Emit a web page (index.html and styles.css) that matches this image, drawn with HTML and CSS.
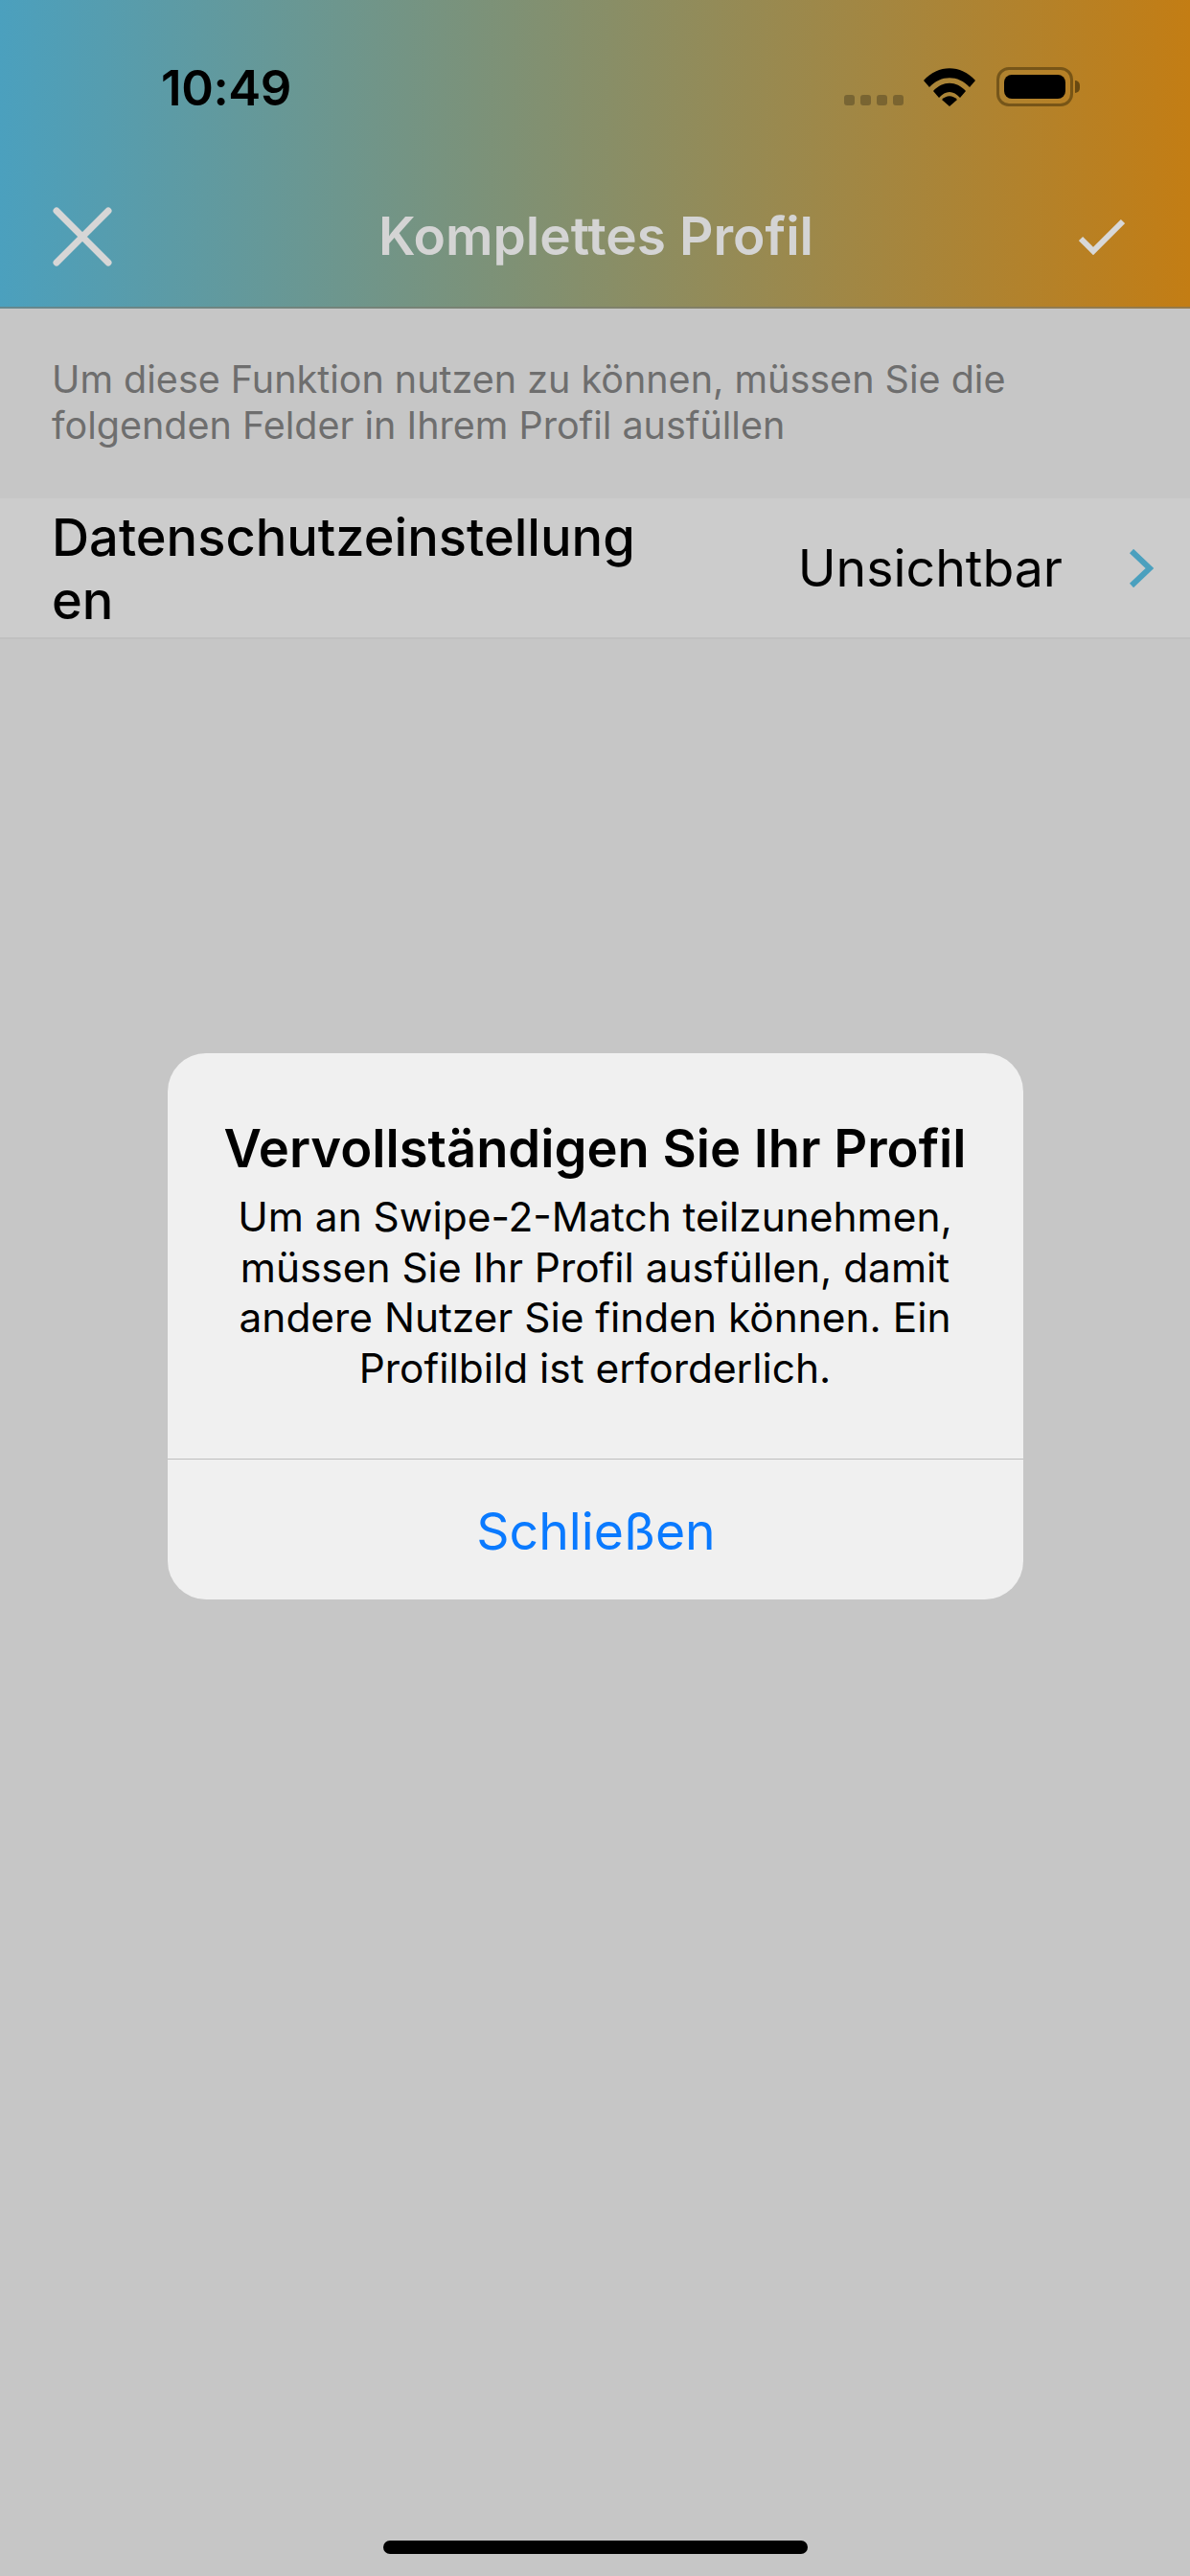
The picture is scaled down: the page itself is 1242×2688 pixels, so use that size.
FILE: index.html
```html
<!DOCTYPE html>
<html lang="de">

<head>
  <meta charset="utf-8">
  <title>Komplettes Profil</title>
  <link rel="stylesheet" href="styles.css">
</head>

<body>
  <div class="screen">
    <header class="topBar">
      <div class="statusBar">
        <span class="time">10:49</span>
        <div class="statusIcons">
          <div class="signal"><i></i><i></i><i></i><i></i></div>
          <svg class="wifi" viewBox="0 0 54 40" width="54" height="40">
            <path d="M0 13 C15 -4 39 -4 54 13 L48 20 C36 7 18 7 6 20 Z" />
            <path d="M10 24 C20 13 34 13 44 24 L38 31 C31 23 23 23 16 31 Z" />
            <path d="M19 33 C24 28 30 28 35 33 L27 40 Z" />
          </svg>
          <div class="battery">
            <div class="batteryBody"><div class="batteryFill"></div></div>
            <div class="batteryCap"></div>
          </div>
        </div>
      </div>
      <div class="navBar">
        <svg class="closeIcon" viewBox="0 0 64 64" width="64" height="64">
          <path d="M5 5 L59 59 M59 5 L5 59" />
        </svg>
        <h1 class="navTitle">Komplettes Profil</h1>
        <svg class="doneIcon" viewBox="0 0 48 38" width="48" height="38">
          <path d="M2 21 L15 34 L46 3" />
        </svg>
      </div>
    </header>

    <p class="hint">Um diese Funktion nutzen zu können, müssen Sie die folgenden Felder in Ihrem Profil ausfüllen</p>

    <div class="fieldRow">
      <span class="fieldLabel">Datenschutzeinstellungen</span>
      <span class="fieldValue">Unsichtbar</span>
      <svg class="chevron" viewBox="0 0 26 40" width="26" height="40">
        <path d="M3 2 L22 20 L3 38" />
      </svg>
    </div>
  </div>

  <div class="overlay">
    <div class="alert">
      <div class="alertBody">
        <h2 class="alertTitle">Vervollständigen Sie Ihr Profil</h2>
        <p class="alertText">Um an Swipe-2-Match teilzunehmen, müssen Sie Ihr Profil ausfüllen, damit andere Nutzer Sie finden können. Ein Profilbild ist erforderlich.</p>
      </div>
      <div class="alertButton">Schließen</div>
    </div>
  </div>

  <div class="homeBar"></div>
</body>

</html>
```

FILE: styles.css
```css
* {
  box-sizing: border-box;
  font-family: Inter, "Liberation Sans", sans-serif;
}

html,
body {
  margin: 0;
  height: 100%;
}

body {
  position: relative;
  background-color: rgb(198, 198, 198);
  overflow: hidden;
}

.screen {
  display: flex;
  flex-direction: column;
}

.topBar {
  height: 322px;
  background: linear-gradient(90deg, rgb(75, 160, 190), rgb(195, 125, 20));
  border-bottom: 2px solid rgba(120, 120, 110, .6);
}

.statusBar {
  height: 184px;
  padding: 64px 115px 0 168px;
  display: flex;
  justify-content: space-between;
  align-items: flex-start;
}

.time {
  font-size: 51px;
  line-height: 56px;
  font-weight: 600;
  letter-spacing: -.4px;
  color: #000;
}

.statusIcons {
  display: flex;
  align-items: flex-start;
  gap: 18px;
  padding-top: 7px;
}

.signal {
  display: flex;
  gap: 6px;
  padding-top: 28px;
  margin-right: 3px;
}

.signal i {
  display: block;
  width: 11px;
  height: 11px;
  border-radius: 3px;
  background-color: rgba(70, 60, 30, .45);
}

.wifi {
  fill: #000;
  display: block;
}

.battery {
  display: flex;
  align-items: center;
  gap: 2px;
  margin-left: 4px;
  margin-top: -1px;
}

.batteryBody {
  width: 80px;
  height: 41px;
  padding: 5px;
  border: 3px solid rgba(70, 50, 10, .55);
  border-radius: 13px;
}

.batteryFill {
  height: 100%;
  background-color: #000;
  border-radius: 8px;
}

.batteryCap {
  width: 5px;
  height: 13px;
  border-radius: 0 5px 5px 0;
  background-color: rgba(70, 50, 10, .7);
}

.navBar {
  height: 136px;
  padding: 31px 68px 0 54px;
  display: flex;
  justify-content: space-between;
  align-items: flex-start;
}

.closeIcon {
  fill: none;
  stroke: rgb(214, 214, 214);
  stroke-width: 7;
  stroke-linecap: round;
}

.navTitle {
  margin: 0;
  font-size: 55px;
  line-height: 62px;
  font-weight: 600;
  color: rgb(212, 212, 212);
}

.doneIcon {
  margin-top: 13px;
  fill: none;
  stroke: rgb(216, 216, 216);
  stroke-width: 6;
}

.hint {
  margin: 0;
  padding: 50px 54px 0;
  height: 198px;
  font-size: 39.5px;
  line-height: 48px;
  color: rgb(110, 110, 110);
}

.fieldRow {
  height: 147px;
  padding-left: 54px;
  padding-right: 38px;
  display: flex;
  align-items: center;
  background-color: rgb(204, 204, 204);
  border-bottom: 2px solid rgb(192, 192, 192);
}

.fieldLabel {
  width: 620px;
  font-size: 54.2px;
  line-height: 66px;
  font-weight: 500;
  color: #000;
  overflow-wrap: anywhere;
}

.fieldValue {
  margin-left: auto;
  margin-right: 69px;
  font-size: 53.6px;
  color: #000;
}

.chevron {
  fill: none;
  stroke: rgb(75, 160, 190);
  stroke-width: 6;
}

.overlay {
  position: absolute;
  inset: 0;
  padding-top: 1099px;
  display: flex;
  justify-content: center;
  align-items: flex-start;
}

.alert {
  width: 893px;
  height: 570px;
  display: flex;
  flex-direction: column;
  background-color: rgb(240, 240, 240);
  border-radius: 40px;
}

.alertBody {
  height: 424px;
  padding: 68px 30px 0;
  text-align: center;
  border-bottom: 1px solid rgb(190, 190, 190);
}

.alertTitle {
  margin: 0;
  font-size: 54.3px;
  line-height: 62px;
  font-weight: 600;
  color: #000;
}

.alertText {
  margin: 15px 0 0;
  font-size: 42.4px;
  line-height: 52.6px;
  color: #000;
}

.alertButton {
  flex: 1;
  padding-top: 2px;
  padding-left: 2px;
  display: flex;
  justify-content: center;
  align-items: center;
  font-size: 53.5px;
  color: rgb(10, 122, 255);
}

.homeBar {
  position: absolute;
  left: 400px;
  top: 2651px;
  width: 443px;
  height: 14px;
  border-radius: 7px;
  background-color: #000;
}
```
